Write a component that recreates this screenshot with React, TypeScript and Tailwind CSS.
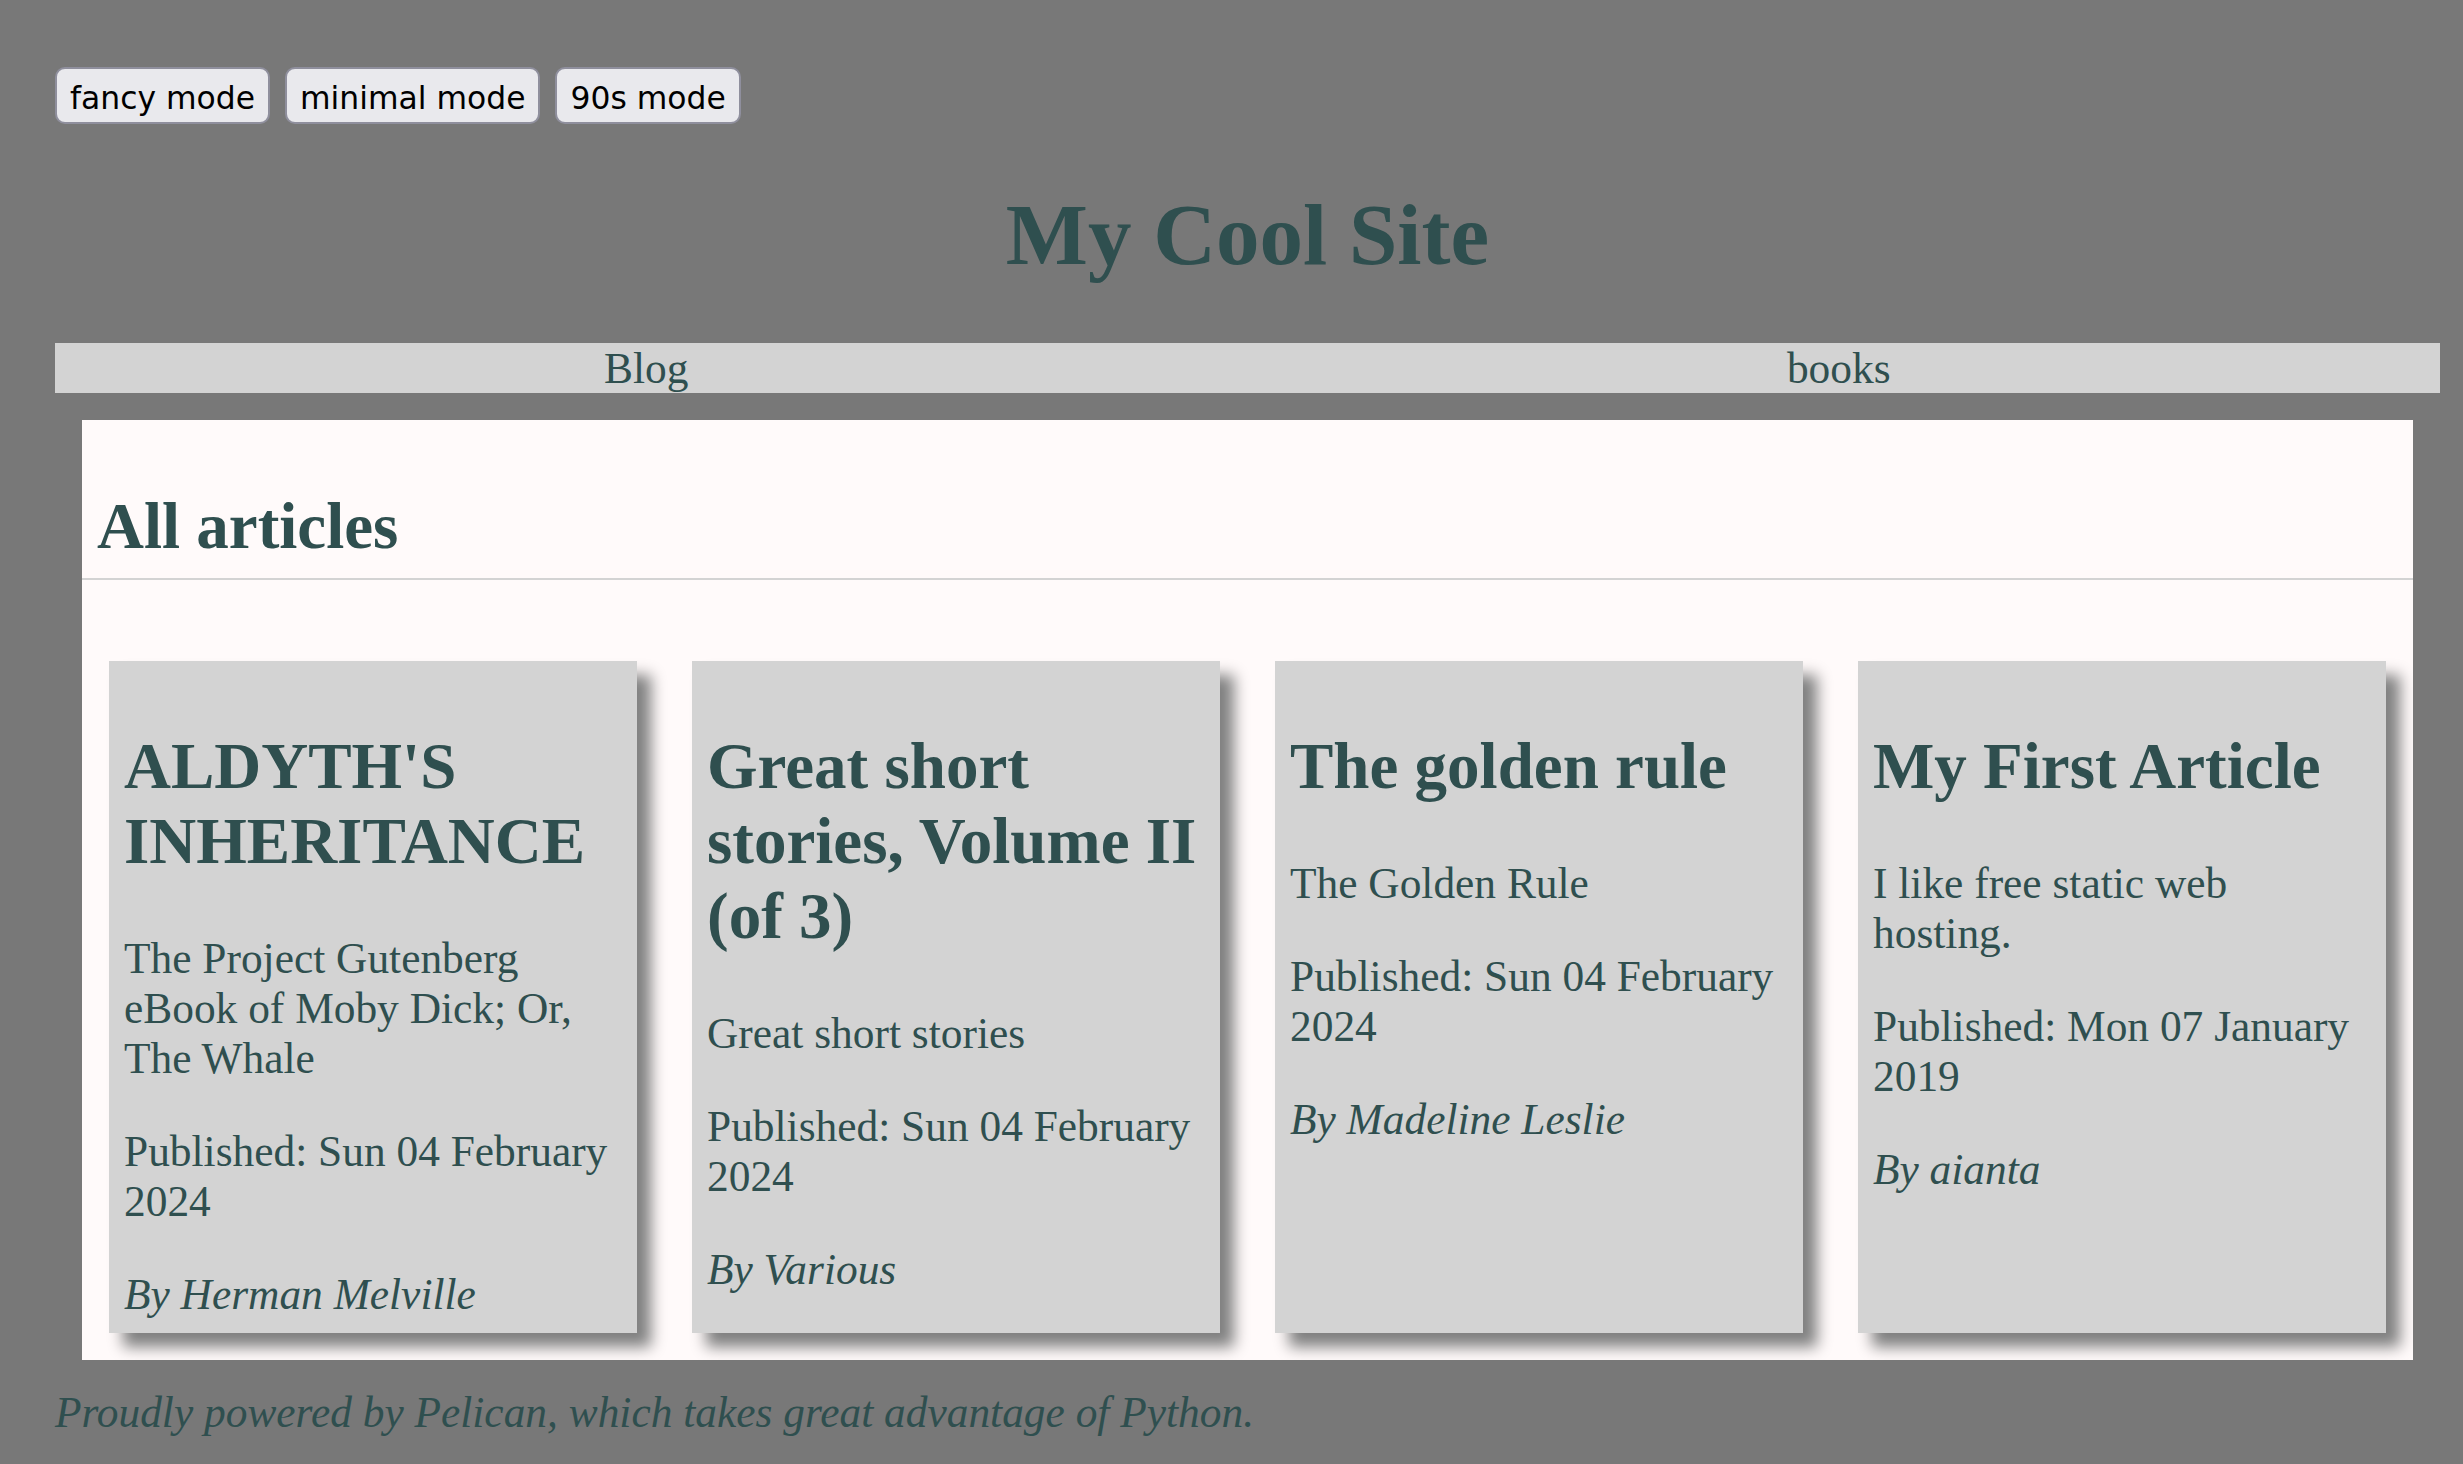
import React from "react";

type Article = {
  title: string;
  summary: string;
  published: string;
  author: string;
};

const articles: Article[] = [
  {
    title: "ALDYTH'S INHERITANCE",
    summary: "The Project Gutenberg eBook of Moby Dick; Or, The Whale",
    published: "Published: Sun 04 February 2024",
    author: "By Herman Melville",
  },
  {
    title: "Great short stories, Volume II (of 3)",
    summary: "Great short stories",
    published: "Published: Sun 04 February 2024",
    author: "By Various",
  },
  {
    title: "The golden rule",
    summary: "The Golden Rule",
    published: "Published: Sun 04 February 2024",
    author: "By Madeline Leslie",
  },
  {
    title: "My First Article",
    summary: "I like free static web hosting.",
    published: "Published: Mon 07 January 2019",
    author: "By aianta",
  },
];

function ModeButton({ label }: { label: string }) {
  return (
    <button className="h-[57px] px-[13px] pt-[6px] flex items-center rounded-[10px] border-2 border-[#8f8f9d] bg-[#e9e9ed] text-black font-['DejaVu_Sans',sans-serif] text-[31.4px] leading-none">
      {label}
    </button>
  );
}

function ArticleCard({ a }: { a: Article }) {
  return (
    <article className="bg-[#d3d3d3] pl-[15px] pr-[13px] py-[14px] shadow-[14px_14px_14px_#808080]">
      <h2 className="mt-[54px] mb-[54px] text-[65px] leading-[75px] font-bold">{a.title}</h2>
      <p className="mb-[43px] text-[43.4px] leading-[50px]">{a.summary}</p>
      <p className="mb-[43px] text-[43.4px] leading-[50px]">{a.published}</p>
      <p className="text-[43.4px] leading-[50px] italic">{a.author}</p>
    </article>
  );
}

export default function App() {
  return (
    <div className="min-h-screen bg-[#787878] pl-[55px] pr-[23px] pt-[67px] pb-[27px] font-['Liberation_Serif',serif] text-[#2f4f4f]">
      {/* mode switcher */}
      <div className="flex gap-[15px] h-[59px] items-start">
        <ModeButton label="fancy mode" />
        <ModeButton label="minimal mode" />
        <ModeButton label="90s mode" />
      </div>

      <h1 className="mt-[59px] mb-[58px] text-center text-[87px] leading-[100px] font-bold">My Cool Site</h1>

      <nav className="flex bg-[#d3d3d3] h-[50px] text-[43.4px] leading-[50px]">
        <a className="flex-1 pr-[10px] text-center">Blog</a>
        <a className="flex-1 pr-[10px] text-center">books</a>
      </nav>

      <main className="mx-[27px] mt-[27px] bg-[#fffafa]">
        <header className="px-[15px] pt-[15px] pb-[14px] border-b-2 border-[#d3d3d3]">
          <h2 className="mt-[54px] text-[65px] leading-[75px] font-bold">All articles</h2>
        </header>
        <section className="grid grid-cols-4 gap-[55px] px-[27px] pt-[81px] pb-[27px]">
          {articles.map((a, i) => (
            <ArticleCard key={i} a={a} />
          ))}
        </section>
      </main>

      <footer className="mt-[27px] italic text-[43.4px] leading-[50px]">
        Proudly powered by Pelican, which takes great advantage of Python.
      </footer>
    </div>
  );
}
